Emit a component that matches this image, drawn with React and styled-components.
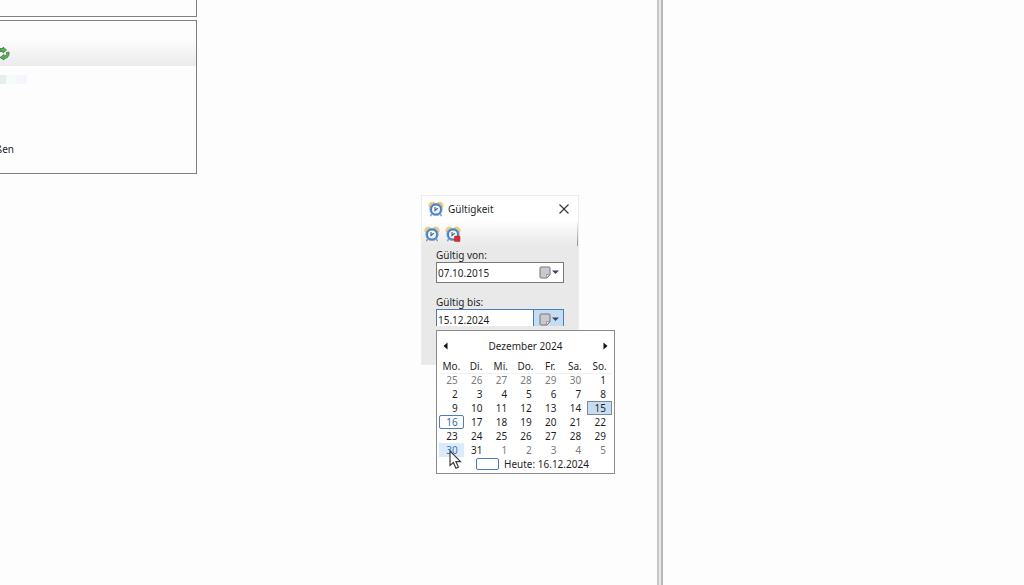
import { useState } from "react";
import styled, { createGlobalStyle } from "styled-components";

const GlobalStyle = createGlobalStyle`
  * {
    box-sizing: border-box;
  }

  body {
    margin: 0;
    overflow: hidden;
    color: #1f1f1f;
    background-color: #fdfdfd;
    font: 10px/14px "Noto Sans", "Open Sans", sans-serif;
  }

  button,
  input {
    color: inherit;
    font: inherit;
  }

  svg {
    display: block;
  }
`;

const Desktop = styled.div`
  display: grid;
  grid-template-columns: minmax(0, 657fr) 6px minmax(0, 361fr);
  height: 100vh;
`;

const Workspace = styled.main`
  position: relative;
`;

const Splitter = styled.div`
  border: solid #c6c6c6;
  border-width: 0 2px;
  border-right-color: #b8b8b8;
  background-color: #e9e9e9;
`;

const Sidebar = styled.aside`
  display: flex;
  flex-direction: column;
  gap: 3px;
  width: 30%;
`;

const Panel = styled.section`
  border: 1px solid #808080;
  border-left: 0;
`;

const TopPanel = styled(Panel)`
  height: 17px;
  border-top: 0;
`;

const PanelToolbar = styled.div`
  height: 45px;
  padding-top: 25px;
  background: linear-gradient(#fdfdfd 40%, #ebebeb);
`;

const PanelBody = styled.div`
  height: 107px;
  padding-top: 9px;
`;

const Swatches = styled.div`
  display: flex;
  height: 9px;
  margin-bottom: 58px;
`;

const Swatch = styled.span`
  width: ${(props) => props.$width}px;
  background-color: ${(props) => props.$color};
`;

const Clipped = styled.div`
  display: flex;
  justify-content: flex-end;
  width: 14px;
  overflow: hidden;
`;

const Dialog = styled.section`
  position: absolute;
  top: 195px;
  left: 421px;
  width: 158px;
  height: 170px;
  border: 1px solid #ececec;
  background-color: #e9e9e9;
`;

const TitleBar = styled.header`
  display: flex;
  align-items: center;
  gap: 4px;
  height: 26px;
  padding: 0 8px 0 6px;
  background-color: #ffffff;
`;

const Title = styled.h1`
  flex: 1;
  margin: 0;
  font: inherit;
`;

const IconButton = styled.button`
  display: flex;
  padding: 0;
  border: 0;
  background: none;
`;

const Toolbar = styled.div`
  display: flex;
  align-items: center;
  gap: 5px;
  height: 24px;
  margin-bottom: 2px;
  padding: 0 2px;
  border-right: 1px solid;
  border-image: linear-gradient(#f4f4f4, #8e8e8e) 1;
  background: linear-gradient(#fdfdfd, #e9e9e9);
`;

const Field = styled.div`
  position: relative;
  display: flex;
  flex-direction: column;
  width: 128px;
  margin-left: 14px;
  margin-bottom: 12px;
`;

const DateBox = styled.div`
  display: flex;
  height: ${(props) => (props.$open ? 17 : 21)}px;
  border: 1px solid ${(props) => (props.$open ? "#4a7ebb" : "#7a7a7a")};
  border-bottom-width: ${(props) => (props.$open ? 0 : 1)}px;
  background-color: #ffffff;
  overflow: hidden;
`;

const DateInput = styled.input`
  flex: 1;
  min-width: 0;
  height: 19px;
  padding: 0 1px;
  border: 0;
  outline: 0;
  background: none;
`;

const DropButton = styled.button`
  display: flex;
  align-items: center;
  justify-content: center;
  width: 30px;
  height: 19px;
  padding: 0;
  border: 0;
  border-left: 1px solid ${(props) => (props.$open ? "#4a7ebb" : "transparent")};
  background-color: ${(props) => (props.$open ? "#c5dcf2" : "transparent")};
`;

const Popup = styled.div`
  position: absolute;
  top: 35px;
  left: 0;
  width: 179px;
  height: 144px;
  padding: 8px 2px 0;
  border: 1px solid #8c8c8c;
  background-color: #ffffff;
`;

const MonthBar = styled.div`
  display: flex;
  align-items: center;
  justify-content: space-between;
  margin-bottom: 6px;
  padding: 0 4px;
`;

const Days = styled.table`
  width: 100%;
  border-collapse: collapse;
  table-layout: fixed;
`;

const Weekday = styled.th`
  padding: 0;
  font-weight: 400;
  box-shadow: 0 1px #f0f0f0;
`;

const Cell = styled.td`
  padding: 0;
`;

const dayLooks = {
  plain: "",
  outside: "color: #7b7b7b;",
  selected: "border-color: #7b8b9c; background-color: #c5dcf2;",
  today: "color: #2f66ad; border-color: #4a7ebb; border-radius: 2px;",
  hovered: "color: #3f74b8; background-color: #dcebfb;",
};

const Day = styled.button`
  display: block;
  width: 100%;
  height: 14px;
  padding: 0 5px 0 0;
  border: 1px solid transparent;
  background: none;
  line-height: 12px;
  text-align: right;
  ${(props) => dayLooks[props.$look]}
`;

const TodayButton = styled.button`
  display: flex;
  align-items: center;
  gap: 5px;
  margin-left: 37px;
  padding: 0;
  border: 0;
  background: none;
`;

const TodayMark = styled.span`
  width: 23px;
  height: 12px;
  border: 1px solid #4a7ebb;
  border-radius: 2px;
`;

const Pointer = styled.svg`
  position: absolute;
  top: 119px;
  left: 12px;
`;

const weekdays = ["Mo.", "Di.", "Mi.", "Do.", "Fr.", "Sa.", "So."];

// Monday 25 November is the first cell of the sheet
const weeks = Array.from({ length: 6 }, (_, week) =>
  Array.from({ length: 7 }, (_, day) => new Date(2024, 10, 25 + week * 7 + day)),
);

function getLook(date) {
  if (date.getMonth() !== 11) return "outside";
  if (date.getDate() === 15) return "selected";
  if (date.getDate() === 16) return "today";
  if (date.getDate() === 30) return "hovered";
  return "plain";
}

function ClockIcon({ stopped }) {
  return (
    <svg width="16" height="16" viewBox="0 0 16 16" aria-hidden="true">
      <path d="M3.5 13 2.5 15.3M12.5 13l1 2.3" stroke="#8996a6" strokeWidth="1.5" />
      <path d="M1 6C.2 2.800 2.400.500 6 1.200L6.500 3 2.500 6.500z" fill="#f5d271" stroke="#dcb75a" strokeWidth=".5" />
      <path d="M15 6c.8-3.200-1.400-5.500-5-4.800L9.500 3l4 3.500z" fill="#f5d271" stroke="#dcb75a" strokeWidth=".5" />
      <circle cx="8" cy="8.4" r="5.2" fill="#f2f8fe" stroke="#4a80c2" strokeWidth="2.400" />
      <circle cx="8" cy="8.4" r="6.1" fill="none" stroke="#8fb4de" strokeWidth=".6" />
      <path d="M7 6v3.500L9.800 7.300" fill="none" stroke="#4c617b" strokeWidth="1.1" />
      {stopped && <rect x="9.500" y="10" width="5.500" height="5.500" rx=".6" fill="#d92d2d" stroke="#b92020" strokeWidth=".5" />}
    </svg>
  );
}

function CalendarIcon() {
  return (
    <svg width="20" height="13" viewBox="0 0 20 13" aria-hidden="true">
      <path d="M2 1h8q1 0 1 1v7l-3 3H2q-1 0-1-1V2q0-1 1-1z" fill="#c9c9cf" stroke="#77777d" />
      <path d="M11 8.500H7.500V12z" fill="#f2f2f2" stroke="#8c8c92" strokeWidth=".8" />
      <path d="M13 4.500h7L16.500 8z" fill="#354766" />
    </svg>
  );
}

function DateField({ id, label, value, onChange, open, children }) {
  return (
    <Field>
      <label htmlFor={id}>{label}</label>
      <DateBox $open={open}>
        <DateInput id={id} value={value} onChange={(e) => onChange(e.target.value)} />
        <DropButton $open={open} aria-label={`${label} Kalender`}>
          <CalendarIcon />
        </DropButton>
      </DateBox>
      {children}
    </Field>
  );
}

function Calendar({ onSelect }) {
  return (
    <Popup>
      <MonthBar>
        <IconButton aria-label="Voriger Monat">
          <svg width="5" height="8" viewBox="0 0 5 8">
            <path d="M4.500.500v7L.500 4z" fill="#111111" />
          </svg>
        </IconButton>
        <span>Dezember 2024</span>
        <IconButton aria-label="Nächster Monat">
          <svg width="5" height="8" viewBox="0 0 5 8">
            <path d="M.500.500v7l4-3.500z" fill="#111111" />
          </svg>
        </IconButton>
      </MonthBar>
      <Days>
        <thead>
          <tr>
            {weekdays.map((weekday) => (
              <Weekday key={weekday}>{weekday}</Weekday>
            ))}
          </tr>
        </thead>
        <tbody>
          {weeks.map((week, index) => (
            <tr key={index}>
              {week.map((date) => (
                <Cell key={date.getTime()}>
                  <Day
                    $look={getLook(date)}
                    onClick={() => onSelect(date.toLocaleDateString("de-DE"))}
                  >
                    {date.getDate()}
                  </Day>
                </Cell>
              ))}
            </tr>
          ))}
        </tbody>
      </Days>
      <TodayButton onClick={() => onSelect("16.12.2024")}>
        <TodayMark />
        Heute: 16.12.2024
      </TodayButton>
      <Pointer width="14" height="20" viewBox="0 0 14 20" aria-hidden="true">
        <path
          d="M1 1v14.5l3.4-3 2.5 5.7 2.5-1.1-2.5-5.5h4.6z"
          fill="#ffffff"
          stroke="#3c3c3c"
          strokeWidth="1.2"
        />
      </Pointer>
    </Popup>
  );
}

export default function App() {
  const [from, setFrom] = useState("07.10.2015");
  const [until, setUntil] = useState("15.12.2024");

  return (
    <Desktop>
      <GlobalStyle />
      <Workspace>
        <Sidebar>
          <TopPanel />
          <Panel>
            <PanelToolbar>
              <IconButton aria-label="Aktualisieren">
                <svg width="10" height="16" viewBox="0 0 10 16">
                  <path
                    d="M0 2.500h3V1l3.500 3L3 7V5.500H0zM6.500 6.500 9 6c.5 4-1.500 6.500-5 6.500V14L0 11.500 4 8.500V10c2 0 3-1.500 2.500-3.500z"
                    fill="#62ad5b"
                    stroke="#34823a"
                    strokeWidth=".8"
                  />
                </svg>
              </IconButton>
            </PanelToolbar>
            <PanelBody>
              <Swatches>
                <Swatch $width={6} $color="#eaedea" />
                <Swatch $width={10} $color="#f4fbfd" />
                <Swatch $width={11} $color="#f5f5fd" />
              </Swatches>
              <Clipped>ßen</Clipped>
            </PanelBody>
          </Panel>
        </Sidebar>
        <Dialog>
          <TitleBar>
            <ClockIcon />
            <Title>Gültigkeit</Title>
            <IconButton aria-label="Schließen">
              <svg width="12" height="12" viewBox="0 0 12 12">
                <path d="m1.500 1.500 9 9m0-9-9 9" stroke="#333333" strokeWidth="1.1" />
              </svg>
            </IconButton>
          </TitleBar>
          <Toolbar>
            <IconButton aria-label="Gültigkeit setzen">
              <ClockIcon />
            </IconButton>
            <IconButton aria-label="Gültigkeit beenden">
              <ClockIcon stopped />
            </IconButton>
          </Toolbar>
          <DateField id="from" label="Gültig von:" value={from} onChange={setFrom} />
          <DateField id="until" label="Gültig bis:" value={until} onChange={setUntil} open>
            <Calendar onSelect={setUntil} />
          </DateField>
        </Dialog>
      </Workspace>
      <Splitter />
    </Desktop>
  );
}
